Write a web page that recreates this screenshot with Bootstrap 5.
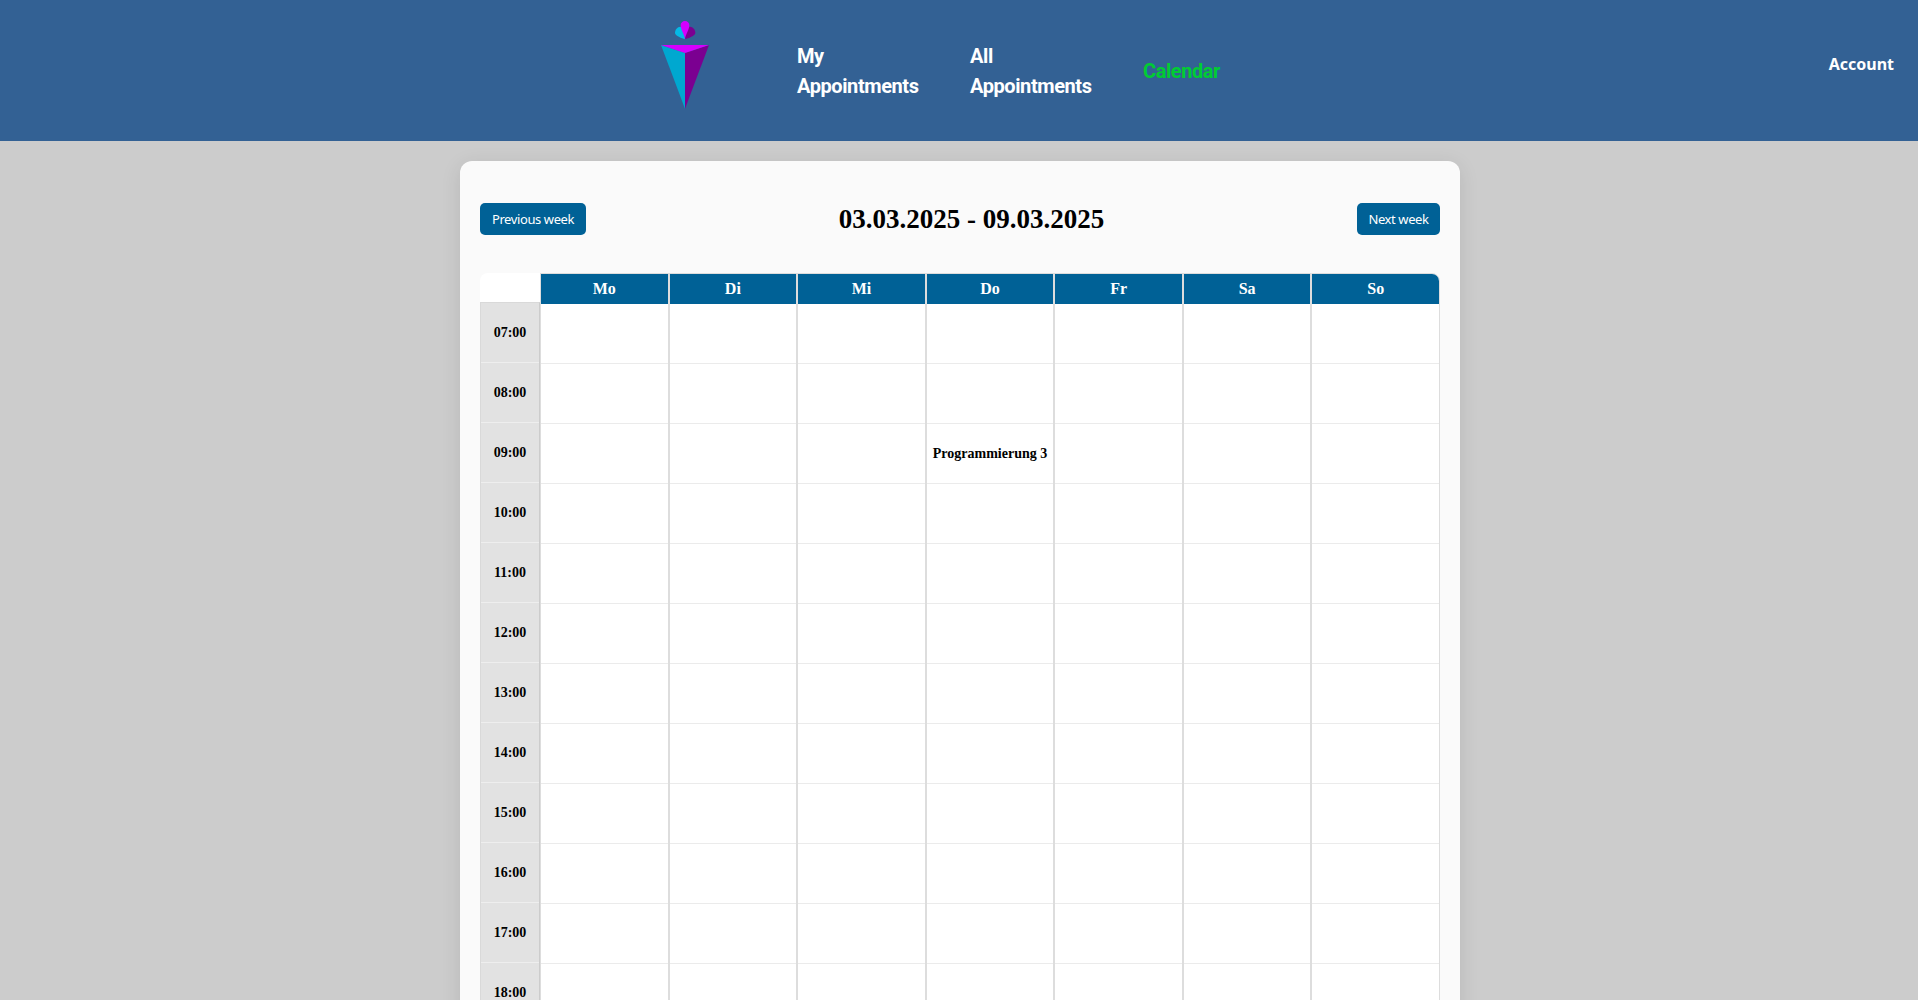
<!DOCTYPE html>
<html lang="en">
<head>
<meta charset="utf-8">
<title>Calendar</title>
<link href="https://cdn.jsdelivr.net/npm/bootstrap@5.3.0/dist/css/bootstrap.min.css" rel="stylesheet">
<style>
body{background:#ccc;color:#000;font-family:"Liberation Serif",serif;height:1000px;overflow:hidden}
.topbar{height:141px;background:#336194;padding:10px 24px 0 640px}
.brand-mark{width:90px;height:110px;margin-right:67px}
.menu-links{margin-top:31px}
.menu-item{font:bold 20px/30px Roboto,sans-serif;color:#fff;text-decoration:none;letter-spacing:-.42px}
.menu-my,.menu-all{width:122px;margin-right:51px}
.menu-item.active{color:#0c3}
.account-link{font:bold 16px/24px "Noto Sans",sans-serif;color:#fff;text-decoration:none;margin-top:42px}
.planner{width:1000px;margin:20px 0 0 460px;padding:42px 20px 20px;background:#fafafa;border-radius:12px;box-shadow:0 4px 20px rgba(0,0,0,.1)}
.week-btn{width:106px;height:32px;padding:0;border:0;border-radius:5px;background:#006196;color:#fff;font:13px/32px "Noto Sans",sans-serif;letter-spacing:-.4px}
.week-btn-next{width:83px}
.week-title{font-size:27px;font-weight:bold;line-height:32px;margin:0}
.week-grid{margin-top:38px}
.hours{width:60px}
.corner{height:29px;background:#fff;border-top-left-radius:8px}
.hours-list{border:1px solid #d3d3d3;border-color:#d9d9d9 #ccc #d9d9d9 #d9d9d9;background:#e2e2e2}
.hour{height:60px;border-bottom:1px solid #eee;font-size:14px;font-weight:bold}
.day{flex:1 1 0;min-width:0;border:1px solid #ddd;background:#fff}
.day:last-child{border-top-right-radius:8px;overflow:hidden}
.day-name{height:30px;background:#006196;color:#fff;font-size:16px;font-weight:bold;line-height:29px}
.slot{height:60px;border-bottom:1px solid #ebebeb;font-size:14px;font-weight:bold;white-space:nowrap}
</style>
<script src="https://cdn.jsdelivr.net/npm/bootstrap@5.3.0/dist/js/bootstrap.bundle.min.js"></script>
</head>
<body>
<nav class="topbar d-flex align-items-start">
  <svg class="brand-mark flex-shrink-0" viewBox="0 0 270 330">
    <path fill="#05b9e6" d="M135 87C126 86 105 77 105 69C105 59 112 50 121 50C129 52 135 70 135 87Z"/>
    <path fill="#7b0091" d="M135 87C144 86 166 77 166 69C166 59 159 50 150 50C141 52 135 70 135 87Z"/>
    <path fill="#d500ff" d="M135 87C133 74 122 58 122 46C122 38 128 33 135 33S148 38 148 46C148 58 137 74 135 87Z"/>
    <path fill="#00a8d0" d="M63 105L135 129V296Z"/>
    <path fill="#7b0091" d="M207 105L135 129V296Z"/>
    <path fill="#d500ff" d="M63 105H207L135 129Z"/>
  </svg>
  <div class="menu-links d-flex align-items-center">
    <a class="menu-item menu-my" href="#">My<br>Appointments</a>
    <a class="menu-item menu-all" href="#">All<br>Appointments</a>
    <a class="menu-item active" href="#">Calendar</a>
  </div>
  <a class="account-link ms-auto" href="#">Account</a>
</nav>
<main class="planner">
  <div class="d-flex justify-content-between align-items-center">
    <button class="week-btn">Previous week</button>
    <h2 class="week-title">03.03.2025 - 09.03.2025</h2>
    <button class="week-btn week-btn-next">Next week</button>
  </div>
  <div class="week-grid d-flex align-items-start" id="grid">
    <div class="hours flex-shrink-0"><div class="corner"></div><div class="hours-list" id="hours"></div></div>
  </div>
</main>
<script>
const hours = document.getElementById('hours'), grid = document.getElementById('grid');
for (let h = 7; h <= 18; h++)
  hours.insertAdjacentHTML('beforeend', `<div class="hour d-flex align-items-center justify-content-center">${String(h).padStart(2, '0')}:00</div>`);
['Mo', 'Di', 'Mi', 'Do', 'Fr', 'Sa', 'So'].forEach(name => {
  let slots = '';
  for (let h = 7; h <= 18; h++)
    slots += `<div class="slot d-flex align-items-center justify-content-center">${name === 'Do' && h === 9 ? 'Programmierung 3' : ''}</div>`;
  grid.insertAdjacentHTML('beforeend', `<div class="day"><div class="day-name text-center">${name}</div>${slots}</div>`);
});
</script>
</body>
</html>
